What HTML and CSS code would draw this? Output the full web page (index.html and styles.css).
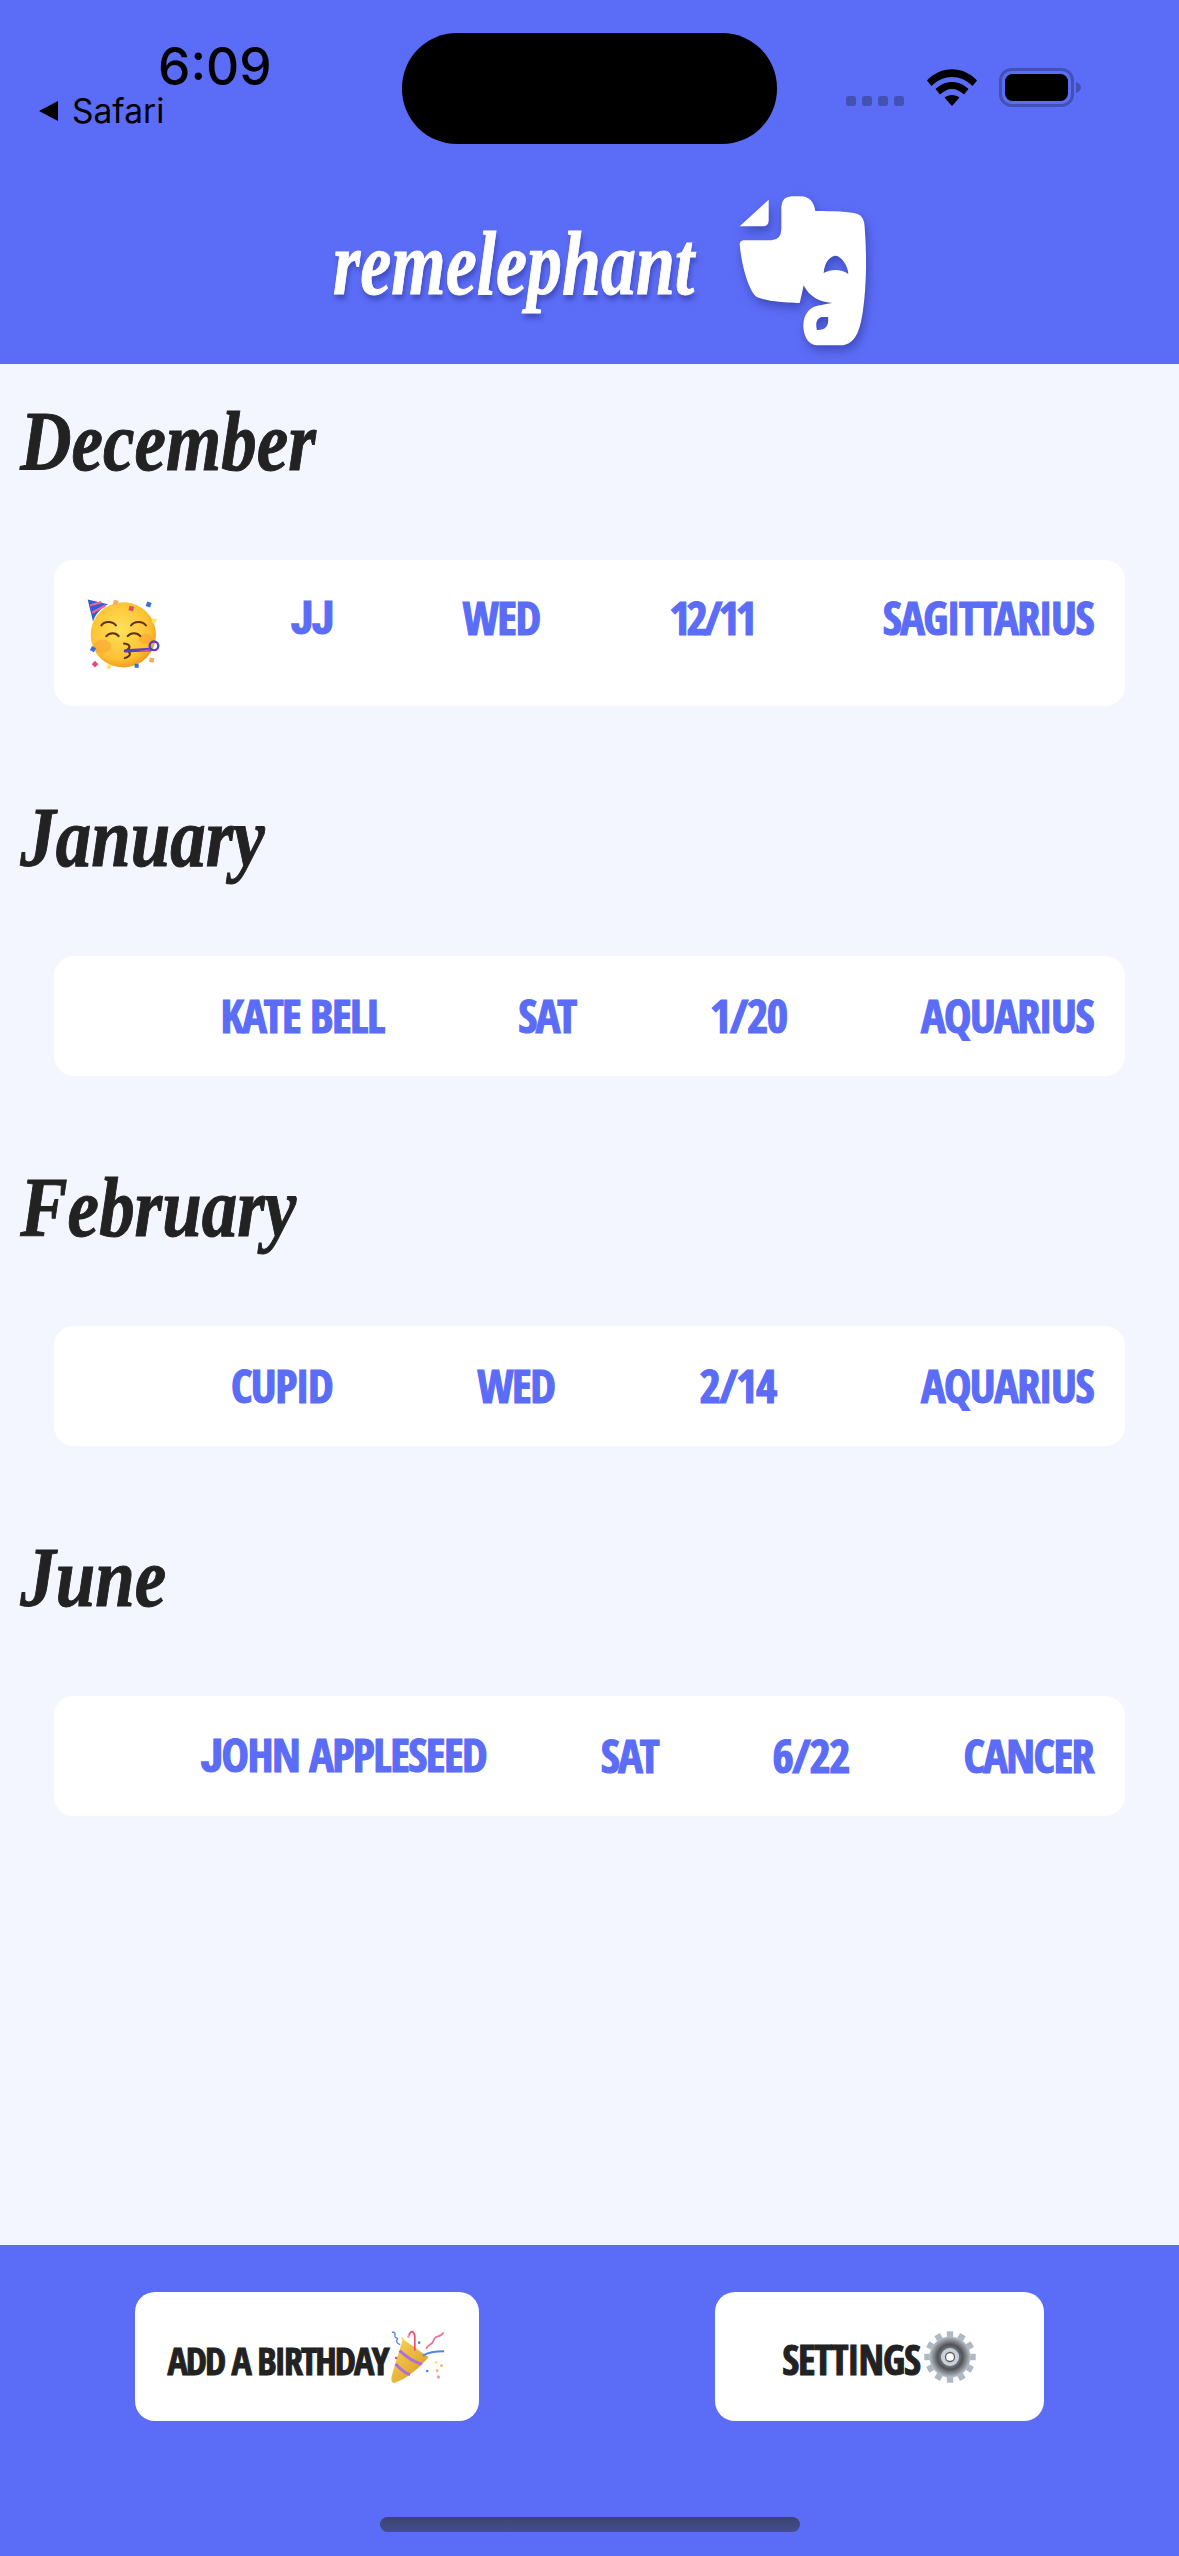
FILE: index.html
```html
<!DOCTYPE html>
<html lang="en">
<head>
<meta charset="utf-8">
<title>remelephant</title>
<link rel="stylesheet" href="styles.css">
</head>
<body>
<div class="app">
  <header class="header">
    <div class="status">
      <div class="status-left">
        <div class="time">6:09</div>
        <div class="back"><svg class="back-arrow" viewBox="0 0 21 20"><path d="M20 0V20L1 10Z"/></svg><span>Safari</span></div>
      </div>
      <div class="island"></div>
      <div class="status-right">
        <div class="signal"><i></i><i></i><i></i><i></i></div>
        <svg class="wifi" viewBox="0 0 50 37">
          <path d="M0 11.500C14-3.500 36-3.500 50 11.500L45.500 17C33.500 5 16.500 5 4.500 17Z"/>
          <path d="M8.500 20C18 10.500 32 10.500 41.500 20L37 25.500C29.500 18 20.500 18 13 25.500Z"/>
          <path d="M17.500 28.500C21.500 25 28.500 25 32.500 28.500L25 37Z"/>
        </svg>
        <svg class="battery" viewBox="0 0 82 39">
          <rect x="1.500" y="1.500" width="72" height="36" rx="11" fill="none" stroke="#4350b4" stroke-width="3"/>
          <rect x="6" y="6" width="63" height="27" rx="7.500"/>
          <path d="M77 14C80 15 82 17 82 19.500C82 22 80 24 77 25Z" fill="#4350b4"/>
        </svg>
      </div>
    </div>
    <div class="brand">
      <span class="brand-name"><span class="brand-text">remelephant</span></span>
      <svg class="brand-logo" viewBox="115 74 384 456">
        <path d="M207 88V150Q207 168 190 168H120Z"/>
        <path fill-rule="evenodd" d="M245 110Q245 80 275 78H305Q340 80 347 122C400 122 450 124 472 130Q495 138 495 170C502 260 500 350 490 420C480 490 465 518 430 525H350Q315 520 311 470C310 430 330 408 365 404Q385 400 398 398C375 396 335 390 312 345Q306 375 300 398C260 398 190 392 168 378C145 355 125 280 120 222Q120 212 132 210H215Q245 208 245 175ZM385 440C388 465 380 480 352 479C347 462 350 445 365 440ZM372 308C375 270 395 256 408 256C425 258 445 285 446 311C425 296 395 296 372 308Z"/>
      </svg>
    </div>
  </header>

  <main class="list">
    <section class="month">
      <h2 class="month-name">December</h2>
      <div class="card card-tall">
        <svg class="emoji" viewBox="140 165 225 215">
          <defs>
            <radialGradient id="face" cx="45%" cy="42%" r="60%"><stop offset="0" stop-color="#ffe15a"/><stop offset=".75" stop-color="#fdc233"/><stop offset="1" stop-color="#ee9a20"/></radialGradient>
          </defs>
          <circle cx="252" cy="278" r="98" fill="url(#face)"/>
          <ellipse cx="190" cy="312" rx="26" ry="20" fill="#f98a35" opacity=".35"/>
          <ellipse cx="318" cy="290" rx="20" ry="16" fill="#f98a35" opacity=".35"/>
          <path d="M145 172L206 186C184 198 168 216 161 238Z" fill="#2f5fc8"/>
          <path d="M152 190L186 180M158 212L198 190" stroke="#ef5fa8" stroke-width="7" fill="none"/>
          <g fill="none" stroke="#5d3205" stroke-width="6" stroke-linecap="round">
            <path d="M186 250C194 236 220 236 230 250M275 250C285 236 310 236 320 250"/>
            <path d="M201 282C210 270 230 270 238 282M265 282C274 270 294 270 303 282"/>
            <path d="M254 304C272 306 276 316 262 324C276 332 276 342 256 348"/>
          </g>
          <path d="M258 326L335 322" stroke="#5b3fc0" stroke-width="10" stroke-linecap="round"/>
          <path d="M300 328L332 324" stroke="#d84a9f" stroke-width="5"/>
          <circle cx="344" cy="311" r="13" fill="none" stroke="#5b3fc0" stroke-width="7"/>
          <rect x="222" y="174" width="14" height="14" fill="#f9ad5c" transform="rotate(15 229 181)"/>
          <rect x="269" y="192" width="14" height="14" fill="#e24a75" transform="rotate(15 276 199)"/>
          <rect x="321" y="180" width="14" height="14" fill="#3c6fd8" transform="rotate(20 328 187)"/>
          <rect x="338" y="229" width="13" height="13" fill="#fbe468" transform="rotate(10 344 235)"/>
          <rect x="154" y="314" width="14" height="14" fill="#3c6fd8" transform="rotate(30 161 321)"/>
          <rect x="160" y="359" width="14" height="14" fill="#e24a75" transform="rotate(45 167 366)"/>
          <rect x="203" y="368" width="12" height="12" fill="#fbe468" transform="rotate(30 209 374)"/>
          <rect x="286" y="365" width="12" height="12" fill="#3c6fd8"/>
          <rect x="330" y="347" width="14" height="14" fill="#f9ad5c" transform="rotate(10 337 354)"/>
        </svg>
        <span class="cell"><span class="cell-j">JJ</span></span><span class="cell">Wed</span><span class="cell cell-tight">12/11</span><span class="cell">Sagittarius</span>
      </div>
    </section>
    <section class="month">
      <h2 class="month-name">January</h2>
      <div class="card"><span class="spacer"></span><span class="cell">Kate Bell</span><span class="cell">Sat</span><span class="cell">1/20</span><span class="cell">Aquarius</span></div>
    </section>
    <section class="month">
      <h2 class="month-name">February</h2>
      <div class="card"><span class="spacer"></span><span class="cell">Cupid</span><span class="cell">Wed</span><span class="cell">2/14</span><span class="cell">Aquarius</span></div>
    </section>
    <section class="month">
      <h2 class="month-name">June</h2>
      <div class="card"><span class="spacer"></span><span class="cell"><span class="cell-j">J</span>ohn Appleseed</span><span class="cell">Sat</span><span class="cell">6/22</span><span class="cell">Cancer</span></div>
    </section>
  </main>

  <footer class="footer">
    <div class="actions">
      <button class="action action-add"><span>Add a Birthday</span>
        <svg class="popper" viewBox="810 185 170 165">
          <defs><linearGradient id="cone" x1="0" y1="0" x2="1" y2="1"><stop offset="0" stop-color="#f9d65c"/><stop offset="1" stop-color="#d9961f"/></linearGradient></defs>
          <path d="M848 215L925 270C900 300 860 335 822 347C812 345 812 335 816 320Z" fill="url(#cone)"/>
          <path d="M838 250C860 270 880 285 905 290M826 290C845 310 855 318 870 322" fill="none" stroke="#b06fd8" stroke-width="9"/>
          <path d="M815 195C835 192 815 210 830 212C838 215 818 222 840 232" fill="none" stroke="#4f86e8" stroke-width="4"/>
          <path d="M866 205C872 188 880 190 884 205L884 250" fill="none" stroke="#ee4d73" stroke-width="5"/>
          <path d="M918 245C925 225 935 240 942 215C948 200 960 215 970 195" fill="none" stroke="#f0708f" stroke-width="5"/>
          <path d="M908 265C925 255 950 252 972 252" fill="none" stroke="#4f86e8" stroke-width="6"/>
          <circle cx="897" cy="226" r="4" fill="#4f86e8"/><circle cx="847" cy="214" r="4" fill="#fbe468"/><circle cx="865" cy="208" r="4" fill="#f39ac0"/>
          <circle cx="828" cy="272" r="4" fill="#e24a75"/><circle cx="948" cy="285" r="4" fill="#fbe468"/><circle cx="921" cy="311" r="4" fill="#4f86e8"/>
          <circle cx="951" cy="310" r="4" fill="#f9ad5c"/><circle cx="964" cy="295" r="4" fill="#f9ad5c"/><circle cx="955" cy="329" r="5" fill="#f39ac0"/>
        </svg>
      </button>
      <button class="action action-settings"><span>Settings</span>
        <svg class="gear" viewBox="-42 -42 84 84">
          <defs><radialGradient id="metal" cx="50%" cy="50%" r="50%"><stop offset=".3" stop-color="#8f959b"/><stop offset=".6" stop-color="#4f5358"/><stop offset=".8" stop-color="#858a90"/><stop offset="1" stop-color="#b9c2cb"/></radialGradient></defs>
          <g fill="#aeb9c4">
            <rect x="-5" y="-40" width="10" height="12"/>
            <rect x="-5" y="-40" width="10" height="12" transform="rotate(30)"/>
            <rect x="-5" y="-40" width="10" height="12" transform="rotate(60)"/>
            <rect x="-5" y="-40" width="10" height="12" transform="rotate(90)"/>
            <rect x="-5" y="-40" width="10" height="12" transform="rotate(120)"/>
            <rect x="-5" y="-40" width="10" height="12" transform="rotate(150)"/>
            <rect x="-5" y="-40" width="10" height="12" transform="rotate(180)"/>
            <rect x="-5" y="-40" width="10" height="12" transform="rotate(210)"/>
            <rect x="-5" y="-40" width="10" height="12" transform="rotate(240)"/>
            <rect x="-5" y="-40" width="10" height="12" transform="rotate(270)"/>
            <rect x="-5" y="-40" width="10" height="12" transform="rotate(300)"/>
            <rect x="-5" y="-40" width="10" height="12" transform="rotate(330)"/>
          </g>
          <circle r="32" fill="url(#metal)"/>
          <circle r="14" fill="#c9d0d8"/>
          <circle r="7" fill="#fff" stroke="#5b5f64" stroke-width="2"/>
        </svg>
      </button>
    </div>
    <div class="home-indicator"></div>
  </footer>
</div>
</body>
</html>
```
FILE: styles.css
```css
* { box-sizing: border-box; }
html, body { margin: 0; padding: 0; }
body { width: 1179px; height: 2556px; overflow: hidden; font-family: "Liberation Sans", sans-serif; }
.app { display: flex; flex-direction: column; height: 2556px; background: #f3f6ff; }

.header { height: 364px; background: #5b6cf6; display: flex; flex-direction: column; }
.status { height: 150px; padding-top: 33px; display: flex; }
.status-left { width: 402px; padding-left: 38px; display: flex; flex-direction: column; }
.time { margin: 8px 0 0 120px; font: 500 51.500px/50px Inter, "Liberation Sans", sans-serif; color: #000; }
.back { display: flex; align-items: center; gap: 13px; margin-top: 2px; font: 33.500px/36px Inter, "Liberation Sans", sans-serif; color: #000; }
.back-arrow { width: 21px; height: 20px; }
.island { width: 375px; height: 111px; border-radius: 55px; background: #000; }
.status-right { flex: 1; display: flex; align-items: flex-start; padding-left: 69px; }
.signal { display: flex; gap: 6px; margin-top: 63px; }
.signal i { width: 10px; height: 10px; border-radius: 3px; background: #4350b4; }
.wifi { width: 50px; height: 37px; margin: 36px 0 0 23px; }
.battery { width: 82px; height: 39px; margin: 35px 0 0 22px; }

.brand { flex: 1; display: flex; justify-content: center; padding-left: 20px; }
.brand-name { width: 365px; margin-top: 67px; white-space: nowrap; }
.brand-text { display: inline-block; font: italic 700 92px/1 "Liberation Serif", serif; color: #fff; -webkit-text-stroke: 1px #fff; text-shadow: 2px 5px 6px rgba(40, 50, 140, .55); transform: scaleX(.76); transform-origin: left; }
.brand-logo { width: 128px; height: 152px; margin: 45px 0 0 40px; fill: #fff; filter: drop-shadow(2px 5px 5px rgba(40, 50, 140, .55)); }

.list { flex: 1; display: flex; flex-direction: column; gap: 54px; }
.month-name { margin: 0; height: 196px; padding: 36px 0 0 24px; font: italic 700 84px/1 "Liberation Serif", serif; color: #222; -webkit-text-stroke: 1px #222; transform: scaleX(.845); transform-origin: left; }
.card { margin: 0 54px; height: 120px; padding: 0 32px; background: #fff; border-radius: 20px; display: flex; align-items: center; justify-content: space-between; }
.card-tall { height: 146px; }
.card-tall .cell { margin-bottom: 30px; }
.spacer { width: 0; }
.emoji { width: 75px; height: 72px; }
.cell { padding-bottom: 3px; font: 700 46px/1 "Open Sans Condensed", "Roboto Condensed", "Liberation Sans", sans-serif; letter-spacing: -1.500px; -webkit-text-stroke: 1.200px #5b6cf6; color: #5b6cf6; text-transform: uppercase; white-space: nowrap; }
.cell-j { font-family: "Roboto Condensed", "Liberation Sans", sans-serif; }
.cell-tight { letter-spacing: -4px; }

.footer { height: 311px; background: #5b6cf6; display: flex; flex-direction: column; align-items: center; }
.actions { width: 100%; padding: 47px 135px 0; display: flex; justify-content: space-between; }
.action { height: 129px; border: 0; border-radius: 20px; background: #fff; display: flex; align-items: center; justify-content: center; padding: 0; font: 700 41px/1 "Open Sans Condensed", "Roboto Condensed", "Liberation Sans", sans-serif; letter-spacing: -1.200px; -webkit-text-stroke: 1px #222; color: #222; text-transform: uppercase; white-space: nowrap; }
.action span { padding-top: 6px; }
.action-add { width: 344px; font-size: 38px; letter-spacing: -2px; }
.action-settings { width: 329px; }
.popper { width: 57px; height: 55px; margin-left: 2px; }
.gear { width: 54px; height: 54px; margin-left: 3px; }
.home-indicator { margin-top: 96px; width: 420px; height: 15px; border-radius: 8px; background: linear-gradient(#3d4370, #434e8e); }
```
